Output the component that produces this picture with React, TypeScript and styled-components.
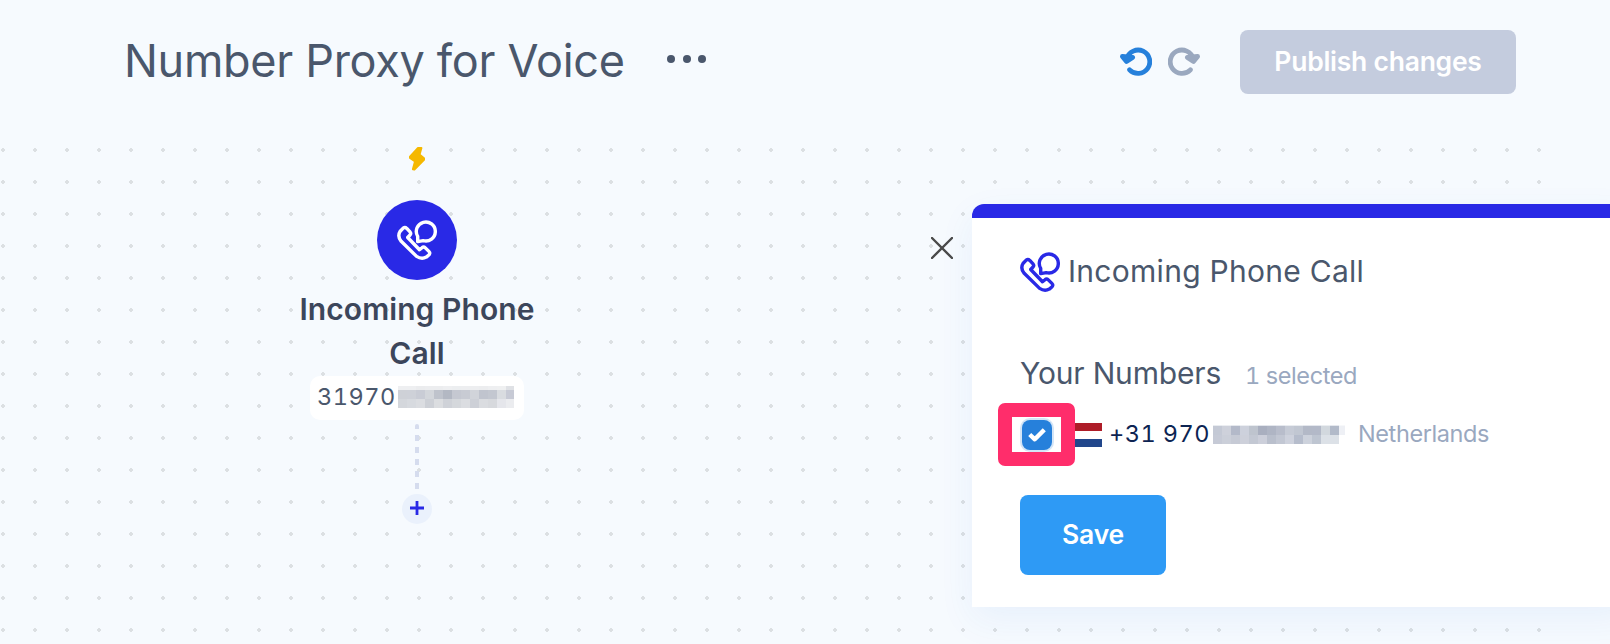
import React from 'react';
import styled, { createGlobalStyle } from 'styled-components';

const Global = createGlobalStyle`
  * { box-sizing: border-box; }
  body { margin: 0; background: #f6fafe; overflow: hidden; font-family: Inter, "Liberation Sans", sans-serif; }
  h1, h2, h3, p { margin: 0; font-weight: 400; }
  button { border: 0; padding: 0; background: none; font: inherit; cursor: pointer; }
  svg { display: block; }
`;

const Page = styled.div`
  width: 1610px;
  height: 644px;
  display: flex;
  flex-direction: column;
  background: #f6fafe;
  overflow: hidden;
`;

const Header = styled.header`
  height: 134px;
  flex: none;
  display: flex;
  align-items: flex-start;
  padding: 30px 94px 0 124px;
`;

const Title = styled.h1`
  width: 543px;
  font-size: 45px;
  line-height: 62px;
  letter-spacing: -0.3px;
  color: #4a576c;
  white-space: nowrap;
`;

const MoreButton = styled.button`
  display: flex;
  gap: 7.6px;
  margin-top: 25px;
`;

const MoreDot = styled.span`
  width: 8px;
  height: 8px;
  border-radius: 50%;
  background: #4a576c;
`;

const History = styled.div`
  display: flex;
  gap: 16px;
  margin: 17px 40px 0 auto;
`;

const PublishButton = styled.button`
  width: 276px;
  height: 64px;
  padding-bottom: 2px;
  border-radius: 8px;
  background: #c4ccde;
  color: #fff;
  font-size: 26.5px;
  font-weight: 600;
  letter-spacing: -0.25px;
  white-space: nowrap;
`;

const Canvas = styled.main`
  position: relative;
  flex: 1;
`;

const Grid = styled.svg`
  position: absolute;
  left: 0;
  top: 0;
`;

const Flow = styled.section`
  position: absolute;
  left: 297px;
  top: 13px;
  width: 240px;
  display: flex;
  flex-direction: column;
  align-items: center;
`;

const NodeCircle = styled.div`
  width: 80px;
  height: 80px;
  margin-top: 29px;
  border-radius: 50%;
  background: #2929e6;
  color: #fff;
  display: flex;
  align-items: center;
  justify-content: center;
`;

const NodeTitle = styled.h2`
  margin-top: 7px;
  font-size: 30px;
  line-height: 44px;
  font-weight: 600;
  letter-spacing: 0.08px;
  color: #3c465b;
  text-align: center;
  white-space: nowrap;
`;

const NumberPill = styled.div`
  width: 214px;
  height: 44px;
  margin-top: 1px;
  padding: 0 0 2px 7px;
  border-radius: 10px;
  background: #fff;
  display: flex;
  align-items: center;
`;

const PillDigits = styled.span`
  width: 81px;
  font-size: 23.5px;
  line-height: 40px;
  letter-spacing: 0.5px;
  color: #4a576c;
  font-feature-settings: "tnum";
  white-space: nowrap;
`;

const Connector = styled.div`
  width: 4px;
  height: 65px;
  margin-top: 4px;
  border-radius: 2px 2px 0 0;
  background: repeating-linear-gradient(#d5dcee 0 5px, transparent 5px 11px, #d5dcee 11px 12px);
`;

const AddButton = styled.button`
  width: 30px;
  height: 30px;
  margin-top: 5px;
  padding-bottom: 2px;
  border-radius: 50%;
  background: #eaf1fc;
  display: flex;
  align-items: center;
  justify-content: center;
`;

const CloseButton = styled.button`
  position: absolute;
  left: 931px;
  top: 103px;
`;

const Panel = styled.aside`
  position: absolute;
  left: 972px;
  top: 70px;
  width: 660px;
  height: 403px;
  padding: 34px 0 0 48px;
  border-top: 14px solid #2929e6;
  border-top-left-radius: 12px;
  background: #fff;
  box-shadow: 0 12px 36px rgba(41, 110, 230, 0.07);
`;

const PanelHeading = styled.div`
  display: flex;
  align-items: center;
  height: 40px;
  gap: 8px;
  color: #2929e6;
`;

const PanelTitle = styled.h2`
  padding-bottom: 2px;
  font-size: 30px;
  line-height: 38px;
  letter-spacing: 0.28px;
  color: #4a576c;
  white-space: nowrap;
`;

const NumbersHeading = styled.div`
  display: flex;
  align-items: baseline;
  margin-top: 61px;
  height: 40px;
`;

const SectionTitle = styled.h3`
  width: 225px;
  font-size: 30px;
  line-height: 40px;
  letter-spacing: -0.17px;
  color: #4a576c;
  white-space: nowrap;
`;

const Muted = styled.span`
  font-size: 23.5px;
  letter-spacing: -0.4px;
  color: #9aa8bf;
  font-feature-settings: "tnum";
  white-space: nowrap;
`;

const NumberRow = styled.div`
  display: flex;
  align-items: center;
  height: 63px;
  margin: 10px 0 0 -22px;
`;

const Highlight = styled.div`
  width: 77px;
  height: 63px;
  flex: none;
  border: 14px solid #ff2d6b;
  border-radius: 7px;
  display: flex;
  align-items: center;
  justify-content: center;
`;

const Checkbox = styled.span`
  width: 30px;
  height: 30px;
  flex: none;
  border-radius: 8px;
  background: #2680db;
  box-shadow: 0 0 0 2px #d3e5f7;
  display: flex;
  align-items: center;
  justify-content: center;
`;

const Flag = styled.span`
  width: 27px;
  height: 24px;
  flex: none;
  background: linear-gradient(#ae1c28 0 8px, #fff 8px 16px, #21468b 16px);
`;

const PhoneNumber = styled.span`
  width: 104px;
  margin-left: 7px;
  padding-bottom: 2px;
  font-size: 23.5px;
  letter-spacing: 0.45px;
  color: #0d2452;
  font-feature-settings: "tnum";
  white-space: nowrap;
`;

const SaveButton = styled.button`
  display: block;
  width: 146px;
  height: 80px;
  margin-top: 29px;
  padding-bottom: 2px;
  border-radius: 8px;
  background: #2e9af5;
  color: #fff;
  font-size: 26.5px;
  font-weight: 600;
  letter-spacing: -0.2px;
`;

const Country = styled(Muted)`
  margin-left: 13px;
  padding-bottom: 2px;
`;

const PhoneIcon = () => (
  <svg width="40" height="40" viewBox="0 0 40 40" fill="none" stroke="currentColor" strokeWidth="3.4" strokeLinejoin="round">
    <path d="M3.2 11.2 6.2 8.1Q8 6.7 9.8 8.4L13 11.9Q14.4 13.5 13 15L10.7 17.5 22.5 29.8 25 27.7Q26.6 26.2 28.3 27.9L31.9 31.4Q33.5 33 32.1 34.7L29.3 37.1Q24.6 39.6 19.6 36.4L4.2 21.3Q0 16.4 3.2 11.2Z" />
    <path d="M20.7 21.6V16.4A9.5 9.5 0 1 1 26.2 20.6Z" />
  </svg>
);

const UndoIcon = ({ color, flip }: { color: string; flip?: boolean }) => (
  <svg width="32" height="30" viewBox="0 0 32 30" fill="none" stroke={color} strokeWidth="4.8" strokeLinecap="round" strokeLinejoin="round">
    <g transform={flip ? 'translate(32 0) scale(-1 1)' : undefined}>
      <path d="M6.8 11.6A11.7 11.7 0 1 1 9.6 22.8" />
      <path d="M2.4 9.4 6.5 14.4 12.6 10.4Z" fill={color} />
    </g>
  </svg>
);

const shortMask = [
  ['#eeeff1', '#eeeff1', '#ebecee', '#ecedef', '#ecedef', '#eeeff1', '#eceef0', '#edeef0', '#edeef0', '#ecedef', '#eeeff1', '#eff0f1', '#dfe1e5'],
  ['#ced1d7', '#ced1d8', '#c9ccd5', '#d3d6db', '#bfc3cc', '#b3b8c3', '#c5c8d1', '#c8cbd3', '#d1d4da', '#c0c4ce', '#c3c7d0', '#d9dce0', '#c7cad5'],
  ['#d4d7dc', '#d7dadf', '#dbdde1', '#cdd0d6', '#dbdde0', '#cfd2d8', '#d5d8dc', '#dbdde1', '#cdd0d7', '#dadce0', '#d7d9dd', '#e5e6eb', '#ebecef'],
];
const longMask = [
  ['#e9ecf0', '#eceef2', '#e5e8ed', '#eceef2', '#e8ebef', '#e3e6ec', '#e3e6ec', '#e5e8ee', '#e9ecf0', '#e9ecf0', '#e4e7ed', '#e4e7ed', '#ebeef1', '#e5e8ee', '#f7f8fa'],
  ['#c4c9d5', '#ced1db', '#b3b9c9', '#cdd1dc', '#bec4ce', '#a9afbf', '#afb5c4', '#b8bdcb', '#c6cbd6', '#c1c7d2', '#b3b9c7', '#b3b9c8', '#d2d8de', '#b2bac9', '#eef0f5'],
  ['#c6cad6', '#cbcfd9', '#c6cad5', '#cdd0da', '#c3c8d3', '#cccfda', '#b9bfcc', '#c2c7d3', '#ced2dd', '#b6bdcc', '#cdd2dc', '#bec5d1', '#dce1e7', '#dce1e7', '#ffffff'],
];

const Mosaic = ({ rows, width, heights }: { rows: string[][]; width: number; heights: number[] }) => {
  const total = heights.reduce((a, b) => a + b, 0);
  return (
    <svg width={width} height={total} shapeRendering="crispEdges">
      {rows.map((row, r) => {
        const y = heights.slice(0, r).reduce((a, b) => a + b, 0);
        return row.map((fill, c) => <rect key={`${r}-${c}`} x={c * 9} y={y} width="9" height={heights[r]} fill={fill} />);
      })}
    </svg>
  );
};

export default function App() {
  return (
    <Page>
      <Global />
      <Header>
        <Title>Number Proxy for Voice</Title>
        <MoreButton aria-label="More options">
          <MoreDot />
          <MoreDot />
          <MoreDot />
        </MoreButton>
        <History>
          <UndoIcon color="#2680db" />
          <UndoIcon color="#9aa8bf" flip />
        </History>
        <PublishButton>Publish changes</PublishButton>
      </Header>
      <Canvas>
        <Grid width="1541" height="510">
          <defs>
            <pattern id="dots" x="1" y="14" width="32" height="32" patternUnits="userSpaceOnUse">
              <path d="M1 0H3V1H4V3H3V4H1V3H0V1H1Z" fill="#dce0e3" />
            </pattern>
          </defs>
          <rect width="1541" height="510" fill="url(#dots)" />
        </Grid>
        <Flow>
          <svg width="16" height="24" viewBox="0 0 16 24" fill="#f5b800" stroke="#f5b800" strokeWidth="2" strokeLinejoin="round">
            <path d="M9 1H12.4L10.5 7.6 15 11.2V12.8L5.4 22.6 3.9 22.2 6 14.4 1 11V9.6Z" />
          </svg>
          <NodeCircle>
            <PhoneIcon />
          </NodeCircle>
          <NodeTitle>
            Incoming Phone
            <br />
            Call
          </NodeTitle>
          <NumberPill>
            <PillDigits>31970</PillDigits>
            <Mosaic rows={shortMask} width={116} heights={[4, 9, 9]} />
          </NumberPill>
          <Connector />
          <AddButton aria-label="Add step">
            <svg width="14" height="14" stroke="#2929e6" strokeWidth="2.8">
              <path d="M7 0V14M0 7H14" />
            </svg>
          </AddButton>
        </Flow>
        <CloseButton aria-label="Close">
          <svg width="22" height="22" stroke="#4a4a4a" strokeWidth="2.4" strokeLinecap="round">
            <path d="M1 1 21 21M21 1 1 21" />
          </svg>
        </CloseButton>
        <Panel>
          <PanelHeading>
            <PhoneIcon />
            <PanelTitle>Incoming Phone Call</PanelTitle>
          </PanelHeading>
          <NumbersHeading>
            <SectionTitle>Your Numbers</SectionTitle>
            <Muted>1 selected</Muted>
          </NumbersHeading>
          <NumberRow>
            <Highlight>
              <Checkbox role="checkbox" aria-checked="true">
                <svg width="18" height="14" fill="none" stroke="#fff" strokeWidth="4.4" strokeLinejoin="round">
                  <path d="M1.7 6.5 6.8 11.3 16.3 1.8" />
                </svg>
              </Checkbox>
            </Highlight>
            <Flag />
            <PhoneNumber>+31 970</PhoneNumber>
            <Mosaic rows={longMask} width={132} heights={[1, 9, 9]} />
            <Country>Netherlands</Country>
          </NumberRow>
          <SaveButton>Save</SaveButton>
        </Panel>
      </Canvas>
    </Page>
  );
}
